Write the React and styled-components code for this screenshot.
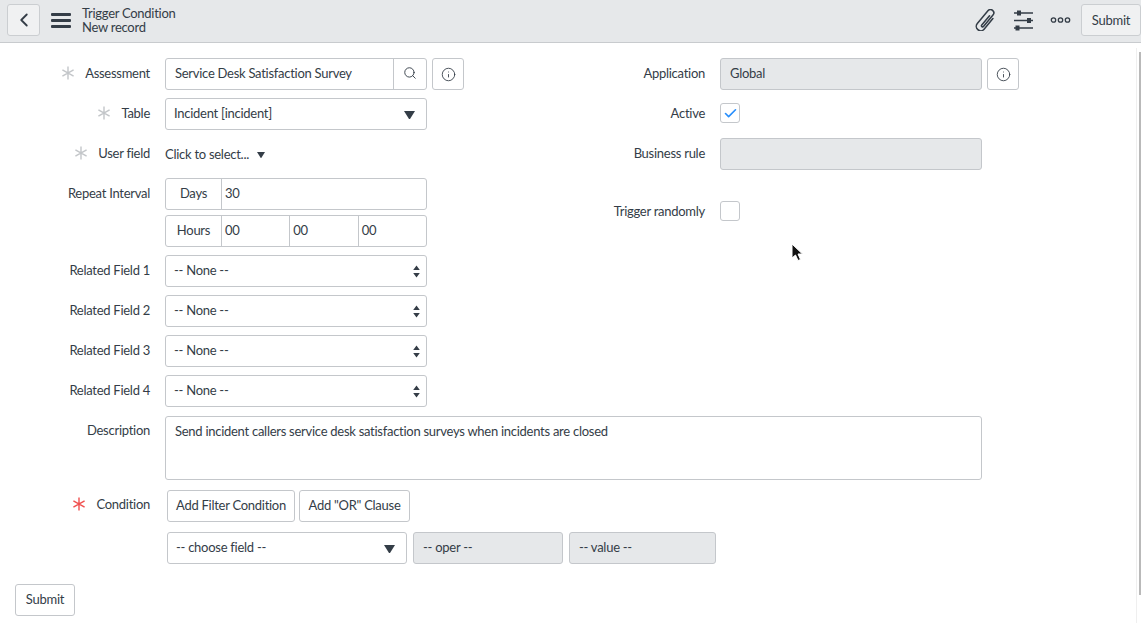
import React from 'react';
import styled, { createGlobalStyle } from 'styled-components';
import { ChevronLeft, Search, Info, Check } from 'lucide-react';

const GlobalStyle = createGlobalStyle`
  html, body {
    margin: 0;
    height: 100%;
    background: #fff;
    overflow: hidden;
  }
  body {
    font-family: "Lato", "Noto Sans", sans-serif;
    font-size: 13px;
    letter-spacing: -0.27px;
    color: #343d47;
  }
`;

const Page = styled.div`
  position: relative;
  height: 623px;
  display: flex;
  flex-direction: column;
  overflow: hidden;
`;

const Header = styled.header`
  box-sizing: border-box;
  height: 43px;
  flex-shrink: 0;
  display: flex;
  align-items: center;
  background: #e6e8ea;
  border-bottom: 1px solid #c8cbce;
  padding: 0 0 2px 7px;
`;

const HeadButton = styled.button`
  height: 32px;
  width: ${(p) => p.$width || 'auto'};
  padding: 0;
  display: flex;
  align-items: center;
  justify-content: center;
  background: #f0f1f2;
  border: 1px solid #cbced1;
  border-radius: 3px;
  color: #343d47;
  font: inherit;
  letter-spacing: inherit;
`;

const Burger = styled.div`
  width: 20px;
  margin-left: 11px;
  display: flex;
  flex-direction: column;
  gap: 3px;
  span {
    height: 3px;
    background: #343d47;
    border-radius: 1px;
  }
`;

const HeadTitle = styled.div`
  margin-left: 11px;
  line-height: 14px;
  flex: 1;
`;

const HeadTools = styled.div`
  display: flex;
  align-items: center;
`;

const IconSlot = styled.span`
  display: flex;
  margin-right: ${(p) => p.$gap || 12}px;
  color: #343d47;
`;

const Form = styled.main`
  flex: 1;
  padding: 15px 0 0;
`;

const Columns = styled.div`
  display: grid;
  grid-template-columns: 555px 1fr;
`;

const Column = styled.div`
  display: flex;
  flex-direction: column;
`;

const Row = styled.div`
  display: grid;
  grid-template-columns: 150px 1fr;
  column-gap: 15px;
  align-items: ${(p) => (p.$top ? 'start' : 'center')};
  min-height: 32px;
  margin-bottom: ${(p) => p.$mb ?? 8}px;
  margin-top: ${(p) => p.$mt ?? 0}px;
`;

const Label = styled.label`
  display: flex;
  justify-content: flex-end;
  align-items: center;
  gap: ${(p) => p.$gap || 10}px;
  height: ${(p) => p.$h || 30}px;
  margin-bottom: ${(p) => (p.$h ? 0 : 2)}px;
  white-space: nowrap;
`;

const Controls = styled.div`
  display: flex;
  gap: ${(p) => p.$gap || 5}px;
  align-items: center;
  padding-left: ${(p) => p.$indent || 0}px;
`;

const Box = styled.div`
  box-sizing: border-box;
  width: ${(p) => p.$width}px;
  height: ${(p) => p.$height || 32}px;
  display: flex;
  align-items: ${(p) => (p.$multi ? 'flex-start' : 'center')};
  background: ${(p) => (p.$off ? '#e6e8ea' : '#fff')};
  border: 1px solid #c4c7cb;
  border-radius: 3px;
  padding: ${(p) => p.$pad || '0 9px'};
  flex-shrink: 0;
  overflow: hidden;
`;

const Grow = styled.span`
  flex: 1;
  padding-bottom: 2px;
`;

const Addon = styled.span`
  align-self: stretch;
  display: flex;
  align-items: center;
  justify-content: center;
  width: ${(p) => p.$width || 55}px;
  padding-bottom: 2px;
  flex-shrink: 0;
  border-left: ${(p) => (p.$left ? '1px solid #c4c7cb' : 'none')};
  border-right: ${(p) => (p.$right ? '1px solid #c4c7cb' : 'none')};
`;

const Cell = styled.span`
  flex: 1;
  align-self: stretch;
  display: flex;
  align-items: center;
  padding: 0 0 2px 3px;
  & + & {
    border-left: 1px solid #c4c7cb;
  }
`;

const IconBox = styled.button`
  box-sizing: border-box;
  width: 32px;
  height: 32px;
  padding: 0;
  display: flex;
  align-items: center;
  justify-content: center;
  background: #fff;
  border: 1px solid #c4c7cb;
  border-radius: 3px;
  color: #343d47;
`;

const Tick = styled.span`
  box-sizing: border-box;
  width: 20px;
  height: 20px;
  margin-bottom: 2px;
  display: flex;
  align-items: center;
  justify-content: center;
  border: 1px solid #c4c7cb;
  border-radius: 3px;
  color: #278efc;
`;

const Button = styled.button`
  box-sizing: border-box;
  width: ${(p) => p.$width}px;
  height: 32px;
  padding: 0 0 2px;
  background: #fff;
  border: 1px solid #c4c7cb;
  border-radius: 3px;
  color: #343d47;
  font: inherit;
  letter-spacing: inherit;
`;

const FootBar = styled.div`
  padding: 20px 0 0 15px;
`;

const CaretIcon = styled.svg`
  flex-shrink: 0;
  margin-top: 2px;
`;

const CursorMark = styled.svg`
  position: absolute;
  left: 791px;
  top: 243px;
`;

const ScrollTrack = styled.div`
  position: absolute;
  right: 0;
  top: 48px;
  bottom: 0;
  width: 4px;
  border-left: 1px solid #efefef;
`;

const ScrollThumb = styled.div`
  position: absolute;
  right: 0;
  top: 4px;
  width: 2px;
  height: 543px;
  background: #b9b9b9;
`;

const Star = ({ red }) => (
  <svg width="14" height="14" viewBox="0 0 14 14" stroke={red ? '#f0504f' : '#c3c6c9'} strokeWidth="1.4">
    <path d="M7 0.5V13.5M1.4 3.8L12.6 10.2M12.6 3.8L1.4 10.2" />
  </svg>
);

const Caret = ({ size = 11 }) => (
  <CaretIcon width={size} height={size * 0.8} viewBox="0 0 10 8" fill="#343d47">
    <path d="M0 0H10L5 8Z" />
  </CaretIcon>
);

const UpDown = () => (
  <svg width="7" height="13" viewBox="0 0 7 13" fill="#343d47">
    <path d="M3.5 0.5L6.8 5H0.2ZM3.5 12.5L0.2 8H6.8Z" />
  </svg>
);

const Clip = () => (
  <svg width="22" height="22" viewBox="1 1 20 20" fill="none" stroke="#343d47" strokeWidth="1.4" strokeLinecap="round">
    <g transform="rotate(40 11 11)">
      <path d="M15 6V18.5a4 4 0 0 1-8 0V3.5a3 3 0 0 1 6 0V17a1 1 0 0 1-2 0V6" />
    </g>
  </svg>
);

const Sliders = () => (
  <svg width="21" height="21" viewBox="0 0 21 21" stroke="#343d47" strokeWidth="1.4" fill="#343d47">
    <path d="M1 3H20M1 10.5H20M1 18H20" />
    <rect x="4" y="0.5" width="4" height="5" stroke="none" />
    <rect x="14" y="8" width="4" height="5" stroke="none" />
    <rect x="2.5" y="15.5" width="4" height="5" stroke="none" />
  </svg>
);

const Dots = () => (
  <svg width="21" height="8" viewBox="0 0 21 8" stroke="#343d47" strokeWidth="1.3" fill="none">
    <circle cx="3.5" cy="4" r="2.2" />
    <circle cx="10.5" cy="4" r="2.2" />
    <circle cx="17.5" cy="4" r="2.2" />
  </svg>
);

const relatedFields = ['Related Field 1', 'Related Field 2', 'Related Field 3', 'Related Field 4'];

export default function App() {
  return (
    <Page>
      <GlobalStyle />
      <Header>
        <HeadButton $width="33px"><ChevronLeft size={22} strokeWidth={2} /></HeadButton>
        <Burger><span /><span /><span /></Burger>
        <HeadTitle>
          <div>Trigger Condition</div>
          <div>New record</div>
        </HeadTitle>
        <HeadTools>
          <IconSlot $gap={16}><Clip /></IconSlot>
          <IconSlot $gap={16}><Sliders /></IconSlot>
          <IconSlot $gap={10}><Dots /></IconSlot>
          <HeadButton $width="60px">Submit</HeadButton>
        </HeadTools>
      </Header>

      <Form>
        <Columns>
          <Column>
            <Row>
              <Label><Star />Assessment</Label>
              <Controls>
                <Box $width={262} $pad="0 0 0 9px">
                  <Grow>Service Desk Satisfaction Survey</Grow>
                  <Addon $width={32} $left><Search size={14} strokeWidth={1.6} /></Addon>
                </Box>
                <IconBox><Info size={15} strokeWidth={1.4} /></IconBox>
              </Controls>
            </Row>
            <Row>
              <Label><Star />Table</Label>
              <Box $width={262} $pad="0 11px 0 8px">
                <Grow>Incident [incident]</Grow>
                <Caret />
              </Box>
            </Row>
            <Row>
              <Label><Star />User field</Label>
              <Controls $gap={8}>Click to select... <Caret size={8} /></Controls>
            </Row>
            <Row $mb={5}>
              <Label>Repeat Interval</Label>
              <Box $width={262} $pad="0">
                <Addon $right>Days</Addon>
                <Cell>30</Cell>
              </Box>
            </Row>
            <Row>
              <span />
              <Box $width={262} $pad="0">
                <Addon $right>Hours</Addon>
                <Cell>00</Cell>
                <Cell>00</Cell>
                <Cell>00</Cell>
              </Box>
            </Row>
            {relatedFields.map((name) => (
              <Row key={name}>
                <Label>{name}</Label>
                <Box $width={262} $pad="0 6px 0 8px">
                  <Grow>-- None --</Grow>
                  <UpDown />
                </Box>
              </Row>
            ))}
          </Column>

          <Column>
            <Row>
              <Label>Application</Label>
              <Controls>
                <Box $width={262} $off><Grow>Global</Grow></Box>
                <IconBox><Info size={15} strokeWidth={1.4} /></IconBox>
              </Controls>
            </Row>
            <Row>
              <Label>Active</Label>
              <Tick><Check size={15} strokeWidth={2.6} /></Tick>
            </Row>
            <Row>
              <Label>Business rule</Label>
              <Box $width={262} $off />
            </Row>
            <Row $mt={18}>
              <Label>Trigger randomly</Label>
              <Tick />
            </Row>
          </Column>
        </Columns>

        <Row $top $mb={10} $mt={1}>
          <Label $h={28}>Description</Label>
          <Box $width={817} $height={64} $pad="6px 9px" $multi>
            Send incident callers service desk satisfaction surveys when incidents are closed
          </Box>
        </Row>
        <Row $top $mb={10}>
          <Label $h={28}><Star red />Condition</Label>
          <Controls $gap={4} $indent={2}>
            <Button $width={128}>Add Filter Condition</Button>
            <Button $width={111}>Add "OR" Clause</Button>
          </Controls>
        </Row>
        <Row $mb={0}>
          <span />
          <Controls $gap={6} $indent={2}>
            <Box $width={240} $pad="0 11px 0 8px">
              <Grow>-- choose field --</Grow>
              <Caret />
            </Box>
            <Box $width={150} $off><Grow>-- oper --</Grow></Box>
            <Box $width={147} $off><Grow>-- value --</Grow></Box>
          </Controls>
        </Row>
        <FootBar><Button $width={60}>Submit</Button></FootBar>
      </Form>

      <ScrollTrack><ScrollThumb /></ScrollTrack>
      <CursorMark width="13" height="19" viewBox="0 0 13 19">
        <path d="M1 1V15L4.5 12L7 17.5L9.5 16.5L7 11H11.5Z" fill="#111" stroke="#fff" strokeWidth="1" />
      </CursorMark>
    </Page>
  );
}
